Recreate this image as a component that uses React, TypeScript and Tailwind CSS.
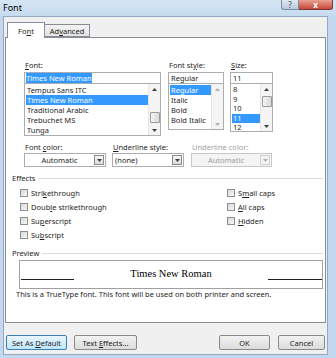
import React from "react";

const FONTS = ["Tempus Sans ITC", "Times New Roman", "Traditional Arabic", "Trebuchet MS", "Tunga"];
const STYLES = ["Regular", "Italic", "Bold", "Bold Italic"];
const SIZES = ["8", "9", "10", "11", "12"];

function Tri({ up, dim }: { up?: boolean; dim?: boolean }) {
  return (
    <svg width="5" height="3" viewBox="0 0 5 3" className="block">
      <path d={up ? "M0 3 L2.5 0 L5 3 Z" : "M0 0 L5 0 L2.5 3 Z"} fill={dim ? "#b0b0b0" : "#404040"} />
    </svg>
  );
}

function ScrollBar({ thumbTop, dim }: { thumbTop?: number; dim?: boolean }) {
  return (
    <div className="flex w-[12px] flex-col items-center border-l border-[#e6e6e6] bg-[#f4f4f4]">
      <div className="flex h-[10px] w-full items-center justify-center">
        <Tri up dim={dim} />
      </div>
      <div className="w-full flex-1">
        {thumbTop !== undefined && (
          <div
            className="mx-auto h-[11px] w-[10px] rounded-[1px] border border-[#9a9a9a] bg-gradient-to-r from-[#f3f3f3] to-[#dadada]"
            style={{ marginTop: thumbTop }}
          />
        )}
      </div>
      <div className="flex h-[10px] w-full items-center justify-center">
        <Tri dim={dim} />
      </div>
    </div>
  );
}

function Label({ children, dim }: { children: React.ReactNode; dim?: boolean }) {
  return <div className={`h-[11px] pl-[1px] ${dim ? "text-[#a0a0a0]" : ""}`}>{children}</div>;
}

function Dropdown({ w, text, center, dim }: { w: string; text: string; center?: boolean; dim?: boolean }) {
  return (
    <div
      className={`flex h-[14px] items-center border ${w} ${
        dim ? "border-[#c8c8c8] bg-[#f4f4f4] text-[#a0a0a0]" : "border-[#abadb3] bg-white"
      }`}
    >
      <div className={`flex-1 ${center ? "text-center" : "pl-[2px]"}`}>{text}</div>
      <div
        className={`mr-[1px] flex h-[10px] w-[10px] items-center justify-center border ${
          dim ? "border-[#d0d0d0] bg-[#f4f4f4]" : "border-[#8a8a8a] bg-gradient-to-b from-[#f6f6f6] to-[#dcdcdc]"
        }`}
      >
        <Tri dim={dim} />
      </div>
    </div>
  );
}

function Check({ children }: { children: React.ReactNode }) {
  return (
    <div className="flex h-[14px] items-center">
      <div className="h-[8px] w-[8px] border border-[#8e8f8f] bg-gradient-to-br from-[#d8d8d8] to-[#f8f8f8]" />
      <div className="pl-[3px]">{children}</div>
    </div>
  );
}

function Btn({ w, children, focus }: { w: string; children: React.ReactNode; focus?: boolean }) {
  return (
    <div
      className={`flex h-[15px] items-center justify-center rounded-[2px] border ${w} ${
        focus
          ? "border-[#3c7fb1] bg-gradient-to-b from-[#eaf6fd] to-[#bee6fd]"
          : "border-[#8a8a8a] bg-gradient-to-b from-[#f2f2f2] to-[#dcdcdc]"
      }`}
    >
      <span>{children}</span>
    </div>
  );
}

export default function App() {
  return (
    <div className="flex h-[358px] w-[336px] flex-col overflow-hidden bg-[#c3d7ee] font-['Noto_Sans',sans-serif] text-[7.5px] leading-[10px] text-[#1e1e1e]">
      {/* Title bar */}
      <div className="flex h-[16px] items-start justify-between bg-gradient-to-b from-[#d6e5f4] to-[#c6dbef]">
        <div className="pl-[3px] pt-[2px] text-[9px] leading-[11px] text-black">Font</div>
        <div className="mr-[3px] flex">
          <div className="flex h-[10px] w-[18px] items-center justify-center rounded-bl-[3px] border border-t-0 border-[#7d8ea3] bg-gradient-to-b from-[#dfe8f2] to-[#b8c9dc] text-[8px] leading-[8px] text-[#3a4a5c]">
            ?
          </div>
          <div className="flex h-[10px] w-[34px] items-center justify-center rounded-br-[3px] border border-l-0 border-t-0 border-[#7a3a3a] bg-gradient-to-b from-[#e8a090] to-[#c4463a] text-[8px] font-bold leading-[8px] text-white">
            x
          </div>
        </div>
      </div>

      {/* Client area */}
      <div className="mb-[3px] ml-[3px] mr-[8px] flex flex-1 flex-col border border-[#94a8bf] bg-[#f0f0f0]">
        {/* Tabs */}
        <div className="ml-[3px] mt-[5px] flex h-[15px] items-end">
          <div className="relative z-10 -mb-px flex h-[16px] w-[38px] items-center justify-center border border-b-0 border-[#898c95] bg-white pt-[1px]">
            <span>
              Fo<u>n</u>t
            </span>
          </div>
          <div className="flex h-[13px] w-[45px] items-center justify-center border border-l-0 border-[#898c95] bg-gradient-to-b from-[#f2f2f2] to-[#e3e3e3]">
            <span>
              Ad<u>v</u>anced
            </span>
          </div>
        </div>

        {/* Panel */}
        <div className="ml-[1px] flex h-[286px] w-[321px] flex-col border border-[#898c95] bg-white">
          {/* Font / style / size */}
          <div className="ml-[18px] mt-[22px] flex">
            <div className="w-[137px]">
              <Label>
                <u>F</u>ont:
              </Label>
              <div className="mt-[1px] flex h-[12px] items-center border border-[#abadb3] pl-[1px]">
                <span className="bg-[#3399ff] text-white">Times New Roman</span>
              </div>
              <div className="flex h-[52px] border border-t-0 border-[#abadb3]">
                <div className="flex-1 pl-[1px] pt-[1px]">
                  {FONTS.map((f) => (
                    <div key={f} className={`h-[10px] pl-[1px] ${f === "Times New Roman" ? "bg-[#3399ff] text-white" : ""}`}>
                      {f}
                    </div>
                  ))}
                </div>
                <ScrollBar thumbTop={18} />
              </div>
            </div>

            <div className="ml-[7px] w-[56px]">
              <Label>
                Font st<u>y</u>le:
              </Label>
              <div className="mt-[1px] flex h-[12px] items-center border border-[#abadb3] pl-[2px]">Regular</div>
              <div className="flex h-[46px] border border-t-0 border-[#abadb3]">
                <div className="flex-1 pl-[1px] pt-[1px]">
                  {STYLES.map((s) => (
                    <div key={s} className={`h-[10px] pl-[1px] ${s === "Regular" ? "bg-[#3399ff] text-white" : ""}`}>
                      {s}
                    </div>
                  ))}
                </div>
                <ScrollBar dim />
              </div>
            </div>

            <div className="ml-[6px] w-[43px]">
              <Label>
                <u>S</u>ize:
              </Label>
              <div className="mt-[1px] flex h-[12px] items-center border border-[#abadb3] pl-[2px]">11</div>
              <div className="flex h-[48px] border border-t-0 border-[#abadb3]">
                <div className="flex-1 pl-[1px] pt-[1px]">
                  {SIZES.map((s) => (
                    <div key={s} className={`h-[9.5px] pl-[1px] leading-[9.5px] ${s === "11" ? "bg-[#3399ff] text-white" : ""}`}>
                      {s}
                    </div>
                  ))}
                </div>
                <ScrollBar thumbTop={2} />
              </div>
            </div>
          </div>

          {/* Color row */}
          <div className="ml-[18px] mt-[6px] flex">
            <div className="w-[82px]">
              <Label>
                Font <u>c</u>olor:
              </Label>
              <Dropdown w="w-[82px]" text="Automatic" center />
            </div>
            <div className="ml-[6px] w-[72px]">
              <Label>
                <u>U</u>nderline style:
              </Label>
              <Dropdown w="w-[72px]" text="(none)" />
            </div>
            <div className="ml-[7px] w-[81px]">
              <Label dim>Underline color:</Label>
              <Dropdown w="w-[81px]" text="Automatic" center dim />
            </div>
          </div>

          {/* Effects */}
          <div className="ml-[6px] mr-[2px] mt-[6px] flex items-center">
            <span>Effects</span>
            <div className="ml-[3px] h-px flex-1 bg-[#dcdcdc]" />
          </div>
          <div className="ml-[14px] mt-[3px] flex">
            <div className="w-[207px]">
              <Check>
                Stri<u>k</u>ethrough
              </Check>
              <Check>
                Doub<u>l</u>e strikethrough
              </Check>
              <Check>
                Su<u>p</u>erscript
              </Check>
              <Check>
                Su<u>b</u>script
              </Check>
            </div>
            <div>
              <Check>
                S<u>m</u>all caps
              </Check>
              <Check>
                <u>A</u>ll caps
              </Check>
              <Check>
                <u>H</u>idden
              </Check>
            </div>
          </div>

          {/* Preview */}
          <div className="ml-[6px] mr-[2px] mt-[6px] flex items-center">
            <span>Preview</span>
            <div className="ml-[3px] h-px flex-1 bg-[#dcdcdc]" />
          </div>
          <div className="ml-[13px] mt-[2px] flex h-[29px] w-[304px] items-start border border-[#a0a0a0]">
            <div className="ml-[1px] mt-[18px] h-px w-[53px] bg-[#202020]" />
            <div className="mt-[6px] flex-1 text-center font-['Liberation_Serif',serif] text-[10.5px] font-normal leading-[13px] text-black">
              Times New Roman
            </div>
            <div className="mt-[18px] h-px w-[54px] bg-[#202020]" />
          </div>
          <div className="ml-[10px] mt-0">This is a TrueType font. This font will be used on both printer and screen.</div>
        </div>

        {/* Buttons */}
        <div className="ml-[2px] mr-[2px] mt-[12px] flex">
          <Btn w="w-[61px]" focus>
            Set As <u>D</u>efault
          </Btn>
          <div className="ml-[7px]">
            <Btn w="w-[63px]">
              Text <u>E</u>ffects...
            </Btn>
          </div>
          <div className="ml-auto flex">
            <Btn w="w-[51px]">OK</Btn>
            <div className="ml-[8px]">
              <Btn w="w-[47px]">Cancel</Btn>
            </div>
          </div>
        </div>
      </div>
    </div>
  );
}
